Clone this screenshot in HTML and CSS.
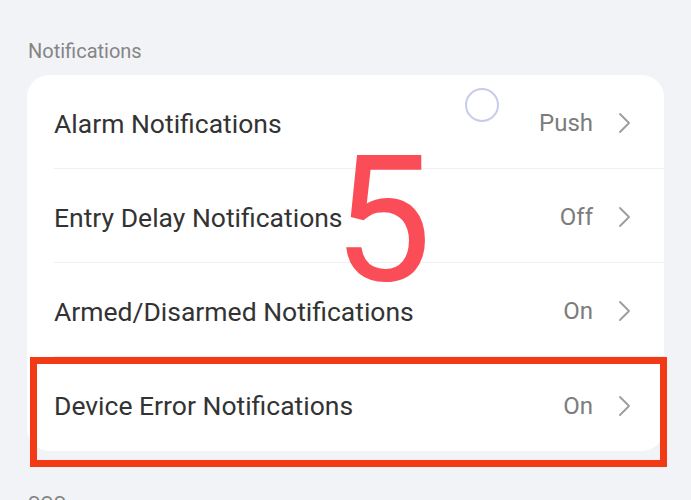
FILE: index.html
```html
<!DOCTYPE html>
<html>
<head>
<meta charset="utf-8">
<link rel="stylesheet" href="styles.css">
</head>
<body>
<div class="page">
  <div class="section-title">Notifications</div>
  <div class="card">
    <div class="row">
      <span class="label">Alarm Notifications</span>
      <span class="value">Push</span>
      <svg class="chev" width="13" height="22" viewBox="0 0 13 22"><path d="M2 2 L11 11 L2 20" fill="none" stroke="#9c9c9c" stroke-width="1.8" stroke-linecap="round" stroke-linejoin="round"/></svg>
    </div>
    <div class="row">
      <span class="label">Entry Delay Notifications</span>
      <span class="value">Off</span>
      <svg class="chev" width="13" height="22" viewBox="0 0 13 22"><path d="M2 2 L11 11 L2 20" fill="none" stroke="#9c9c9c" stroke-width="1.8" stroke-linecap="round" stroke-linejoin="round"/></svg>
    </div>
    <div class="row">
      <span class="label">Armed/Disarmed Notifications</span>
      <span class="value">On</span>
      <svg class="chev" width="13" height="22" viewBox="0 0 13 22"><path d="M2 2 L11 11 L2 20" fill="none" stroke="#9c9c9c" stroke-width="1.8" stroke-linecap="round" stroke-linejoin="round"/></svg>
    </div>
    <div class="row">
      <span class="label">Device Error Notifications</span>
      <span class="value">On</span>
      <svg class="chev" width="13" height="22" viewBox="0 0 13 22"><path d="M2 2 L11 11 L2 20" fill="none" stroke="#9c9c9c" stroke-width="1.8" stroke-linecap="round" stroke-linejoin="round"/></svg>
    </div>
  </div>
  <div class="section-title next">SOS</div>

  <div class="touch-ring"></div>
  <div class="step-number">5</div>
  <div class="highlight"></div>
</div>
</body>
</html>
```

FILE: styles.css
```css
* { box-sizing: border-box; }
html, body {
  margin: 0;
  padding: 0;
  background: #f2f3f7;
  overflow: hidden;
}
.page {
  position: relative;
  width: 691px;
  height: 500px;
  padding: 39px 27px 0 27px;
  font-family: Roboto, "Noto Sans", sans-serif;
}
.section-title {
  font-size: 20px;
  line-height: 24px;
  color: #858585;
  padding-left: 1px;
}
.section-title.next {
  margin-top: 41px;
}
.card {
  margin-top: 12px;
  background: #ffffff;
  border-radius: 22px;
  width: 637px;
  overflow: hidden;
}
.row {
  display: flex;
  align-items: center;
  height: 94px;
  padding-top: 3px;
  margin-left: 27px;
  padding-right: 33px;
  border-bottom: 1px solid #efefef;
}
.row:last-child {
  border-bottom: none;
}
.label {
  flex: 1;
  font-size: 26.5px;
  color: #333333;
}
.value {
  font-size: 24px;
  color: #7c7c7c;
  margin-right: 25px;
}
.chev {
  display: block;
}
.touch-ring {
  position: absolute;
  left: 465px;
  top: 88px;
  width: 34px;
  height: 34px;
  border-radius: 50%;
  border: 2px solid #c9cbeb;
}
.step-number {
  position: absolute;
  left: 333px;
  top: 132px;
  font-size: 176px;
  line-height: 1;
  color: #fa4d58;
  font-family: Roboto, sans-serif;
}
.highlight {
  position: absolute;
  left: 30px;
  top: 357px;
  width: 637px;
  height: 110px;
  border: 7px solid #f23a17;
}
```
